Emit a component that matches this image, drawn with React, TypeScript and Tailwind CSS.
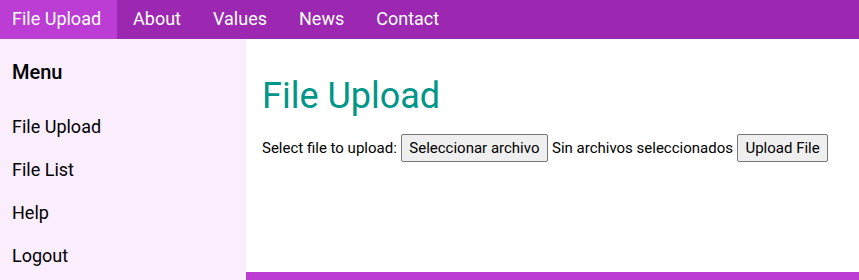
export default function App() {
  const nav = ["File Upload", "About", "Values", "News", "Contact"];
  const menu = ["File Upload", "File List", "Help", "Logout"];

  return (
    <div className="h-[280px] overflow-hidden bg-white text-[15px] text-black font-['Roboto',sans-serif]">
      {/* Top bar */}
      <div className="flex h-[39px] bg-[#9c27b0] text-white text-[18px]">
        {nav.map((item, i) => (
          <a
            key={item}
            href="#"
            className={
              i === 0
                ? "flex items-center pb-[3px] pl-3 pr-4 bg-[#bb3dd3]"
                : "flex items-center pb-[3px] px-4"
            }
          >
            {item}
          </a>
        ))}
      </div>

      <div className="flex h-[241px]">
        {/* Sidebar */}
        <div className="w-[246px] shrink-0 bg-[#faedfc] pt-[18px]">
          <h3 className="px-3 text-[20px] leading-[30px] font-medium">Menu</h3>
          <div className="mt-[18px] flex flex-col">
            {menu.map((item) => (
              <a key={item} href="#" className="px-3 py-2 text-[18px] leading-[27px]">
                {item}
              </a>
            ))}
          </div>
        </div>

        {/* Main */}
        <div className="flex flex-1 flex-col">
          <div className="h-[233px] px-4 pt-[30px]">
            <h1 className="text-[36px] leading-[54px] text-[#009688]">File Upload</h1>
            <form className="mt-[11px] flex items-center gap-[4px]">
              <span>Select file to upload:</span>
              <button
                type="button"
                className="h-[28px] rounded-[2px] border border-[#767676] bg-[#efefef] px-[7.5px]"
              >
                Seleccionar archivo
              </button>
              <span>Sin archivos seleccionados</span>
              <button
                type="button"
                className="h-[28px] rounded-[2px] border border-[#767676] bg-[#efefef] px-[7.5px]"
              >
                Upload File
              </button>
            </form>
          </div>
          <footer className="flex-1 bg-[#bb3dd3]" />
        </div>
      </div>
    </div>
  );
}
